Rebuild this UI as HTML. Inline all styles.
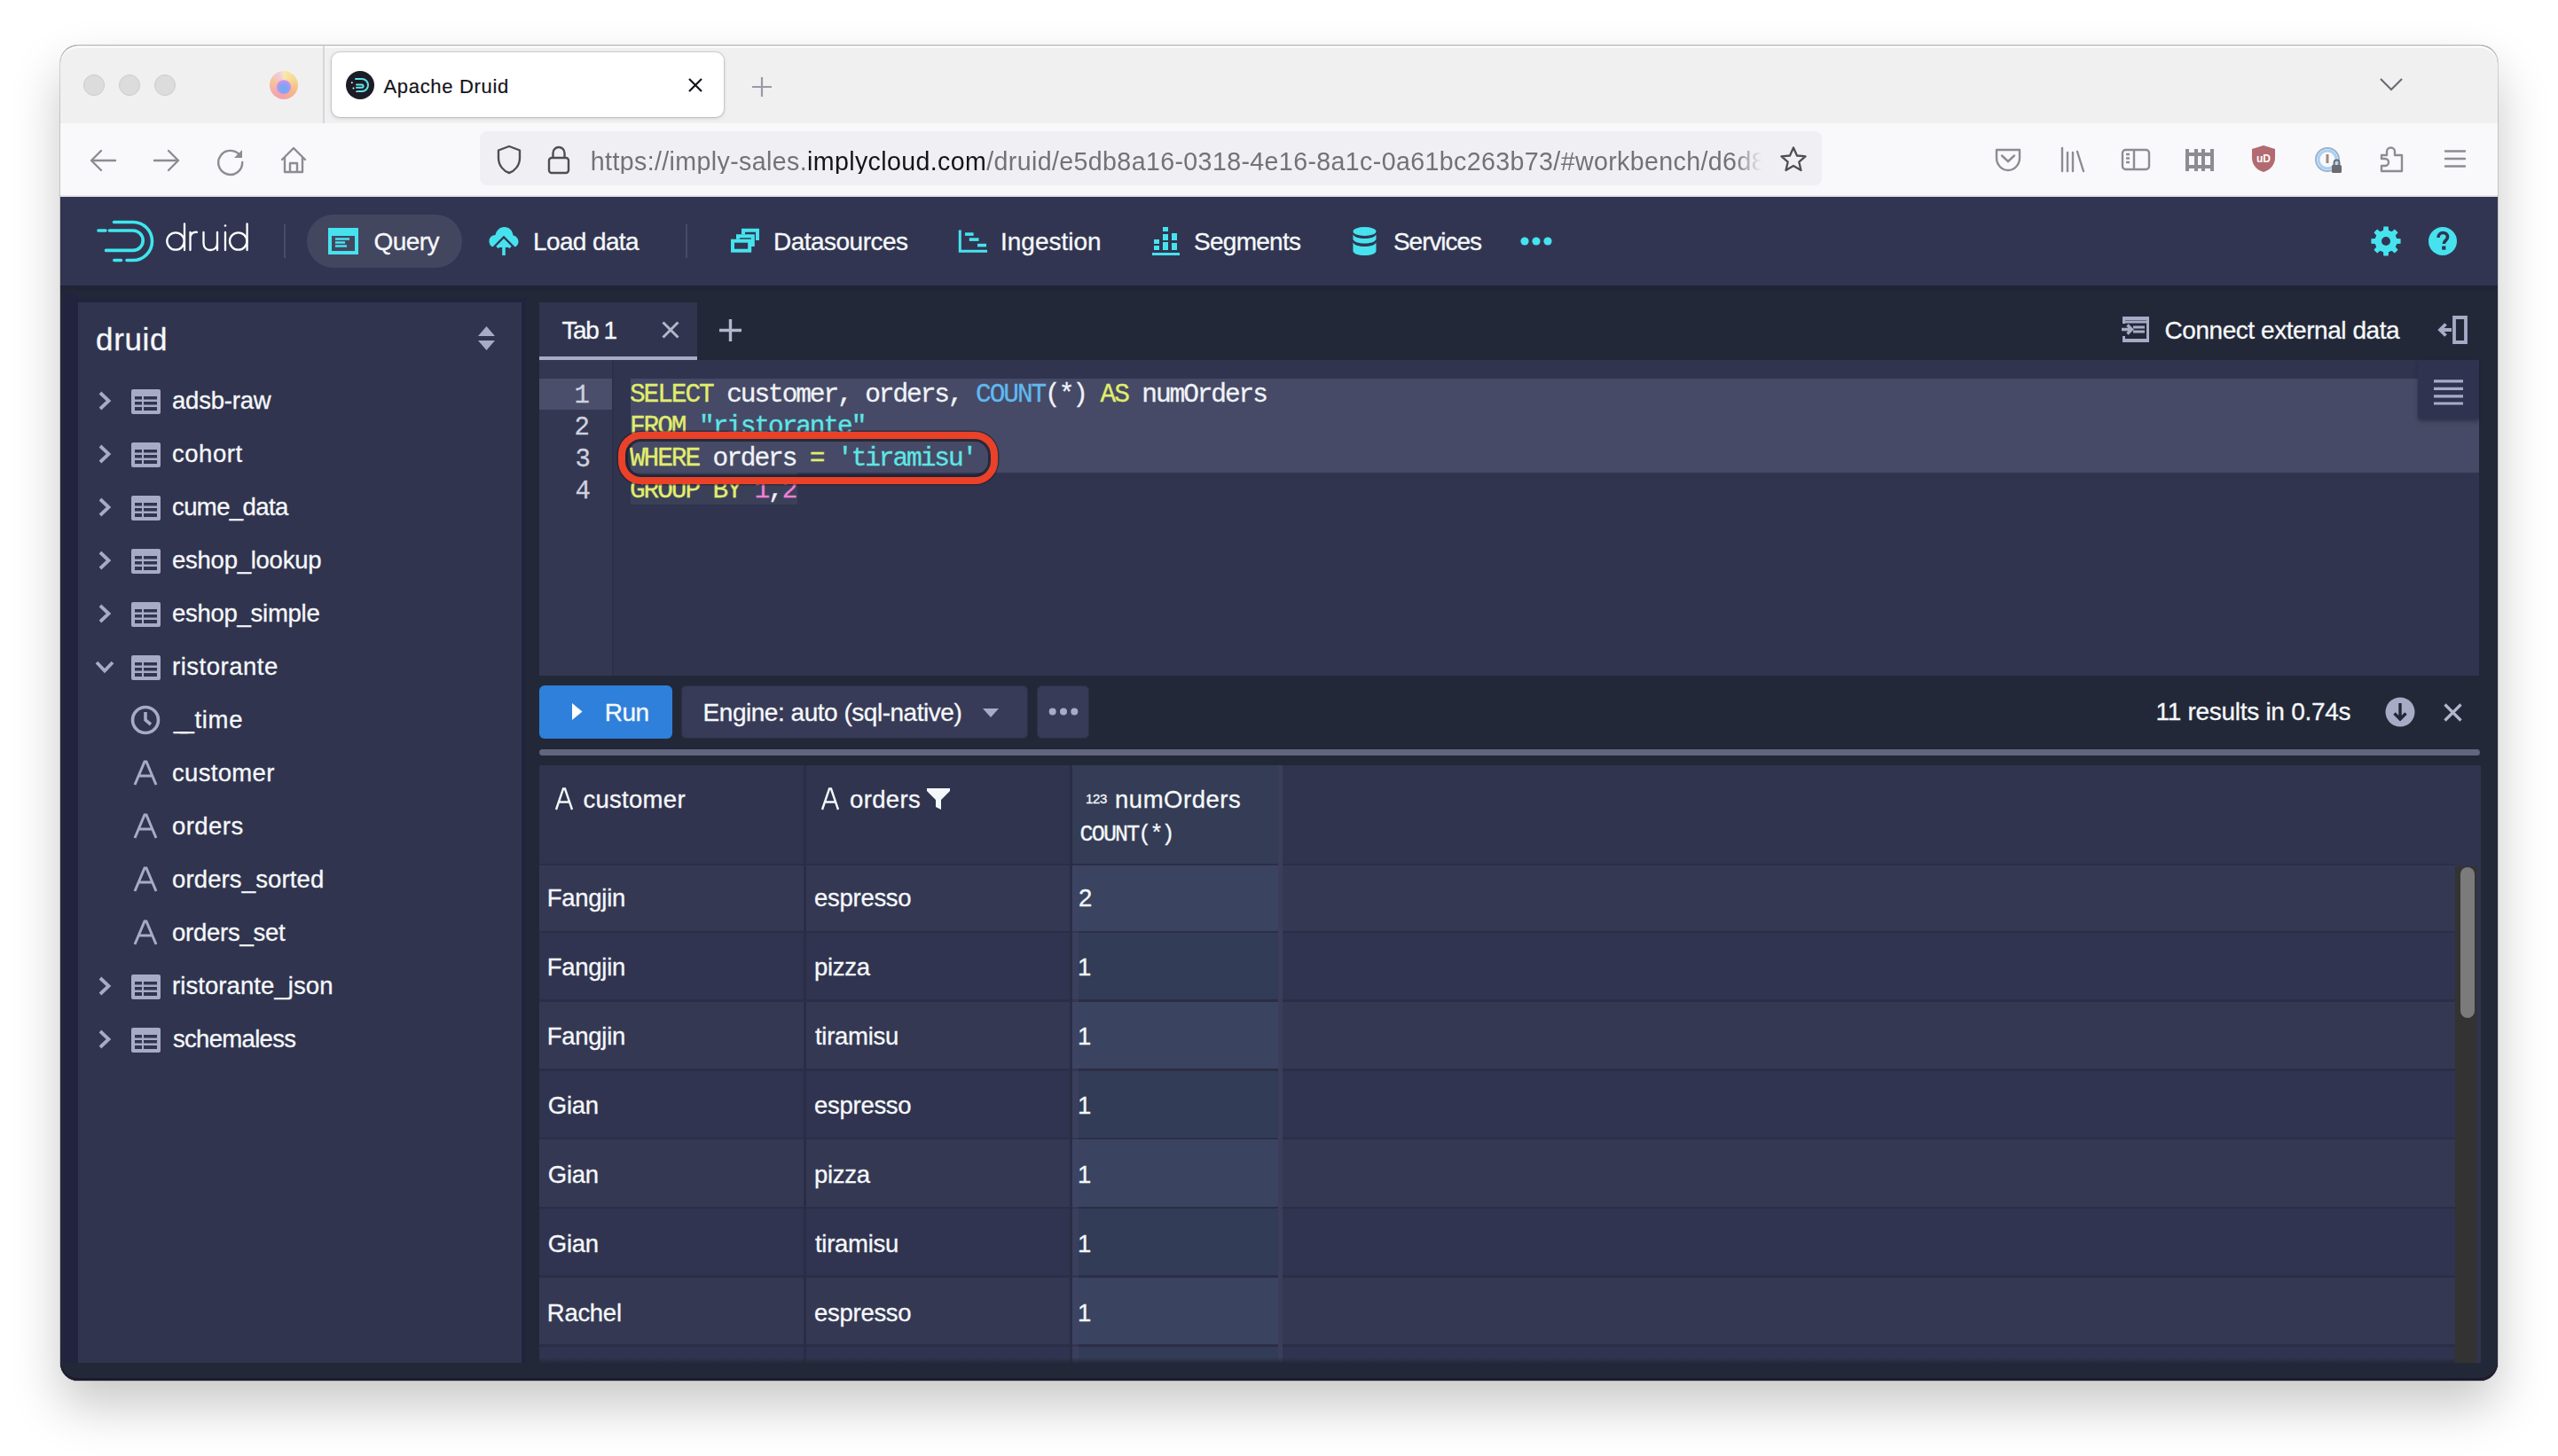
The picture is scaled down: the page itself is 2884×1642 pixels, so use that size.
<!DOCTYPE html>
<html><head><meta charset="utf-8">
<style>
*{box-sizing:border-box;margin:0;padding:0}
html,body{width:2884px;height:1642px;overflow:hidden;background:#ffffff;font-family:"Liberation Sans",sans-serif;position:relative}
.a{position:absolute}
.t{position:absolute;white-space:nowrap;line-height:1}
svg{position:absolute;overflow:visible}
.m{font-family:"Liberation Mono",monospace}
</style></head>
<body>
<!-- window base + shadow -->
<div class="a" style="left:68px;top:51px;width:2748px;height:1506px;border-radius:20px;background:#232838;box-shadow:0 28px 56px rgba(0,0,0,0.22),0 0 0 1px rgba(0,0,0,0.14)"></div>
<!-- tab strip -->
<div class="a" style="left:68px;top:51px;width:2748px;height:88px;background:#f0f0f1;border-radius:20px 20px 0 0;border-top:1px solid #c9c9cc;box-shadow:inset 0 2px 0 rgba(255,255,255,0.85)"></div>
<!-- toolbar -->
<div class="a" style="left:68px;top:139px;width:2748px;height:83px;background:#f9f9fb"></div>
<div class="a" style="left:68px;top:220px;width:2748px;height:2px;background:#e4e4ea"></div>

<!-- traffic lights -->
<div class="a" style="left:94px;top:84px;width:24px;height:24px;border-radius:50%;background:#dcdcdc;border:1px solid #cbcbcb"></div>
<div class="a" style="left:134px;top:84px;width:24px;height:24px;border-radius:50%;background:#dcdcdc;border:1px solid #cbcbcb"></div>
<div class="a" style="left:174px;top:84px;width:24px;height:24px;border-radius:50%;background:#dcdcdc;border:1px solid #cbcbcb"></div>
<!-- firefox icon -->
<div class="a" style="left:304px;top:80px;width:32px;height:32px;border-radius:50%;background:conic-gradient(from 0deg,#f9e9a0 0deg,#f8d48a 60deg,#f7b27e 120deg,#f59aa0 180deg,#f4a0a8 230deg,#f6c08a 290deg,#f3c6e8 340deg,#f9e9a0 360deg);opacity:.9"></div>
<div class="a" style="left:312px;top:90px;width:16px;height:16px;border-radius:50%;background:radial-gradient(circle at 50% 60%,#7fa6f4 0 35%,#c690f0 65%,rgba(240,160,200,0) 100%)"></div>
<!-- separator -->
<div class="a" style="left:364px;top:52px;width:2px;height:87px;background:#d6d6da"></div>
<!-- active tab -->
<div class="a" style="left:374px;top:59px;width:442px;height:73px;border-radius:9px;background:#ffffff;box-shadow:0 0 0 1px rgba(0,0,0,0.10),0 1px 4px rgba(0,0,0,0.18)"></div>
<div class="a" style="left:390px;top:80px;width:32px;height:32px;border-radius:50%;background:#1c1c26"></div>
<svg style="left:390px;top:80px" width="32" height="32" viewBox="0 0 32 32"><g fill="none" stroke="#5fe3e8" stroke-width="2" stroke-linecap="round"><path d="M11 9 H18 A7 7 0 0 1 18 23 H14"/><path d="M12 15.5 H18 A1.6 1.6 0 0 1 18 18.7 H12"/></g><g fill="#e8f4f8"><circle cx="6.8" cy="13.2" r="1"/><circle cx="8.5" cy="19.5" r="1"/><circle cx="12.3" cy="23.2" r="0.9"/></g></svg>
<div class="t" style="left:432.5px;top:86.9px;font-size:22px;letter-spacing:0.68px;color:#15141a;-webkit-text-stroke:0.2px #15141a">Apache Druid</div>
<svg style="left:776px;top:88px" width="16" height="16" viewBox="0 0 16 16"><path d="M1 1 L15 15 M15 1 L1 15" stroke="#15141a" stroke-width="2.2"/></svg>
<svg style="left:848px;top:87px" width="22" height="22" viewBox="0 0 22 22"><path d="M11 0 V22 M0 11 H22" stroke="#9a9aa6" stroke-width="2.2"/></svg>
<!-- chevron -->
<svg style="left:2683px;top:88px" width="26" height="14" viewBox="0 0 26 14"><path d="M1 1 L13 13 L25 1" fill="none" stroke="#6b6b75" stroke-width="2.2"/></svg>

<!-- nav toolbar icons -->
<svg style="left:100px;top:168px" width="32" height="26" viewBox="0 0 32 26"><path d="M30 13 H3 M14 2 L3 13 L14 24" fill="none" stroke="#8c8c92" stroke-width="2.4" stroke-linecap="round" stroke-linejoin="round"/></svg>
<svg style="left:172px;top:168px" width="32" height="26" viewBox="0 0 32 26"><path d="M2 13 H29 M18 2 L29 13 L18 24" fill="none" stroke="#8c8c92" stroke-width="2.4" stroke-linecap="round" stroke-linejoin="round"/></svg>
<svg style="left:244px;top:166px" width="32" height="32" viewBox="0 0 32 32"><path d="M27 10 A13.5 13.5 0 1 0 29.2 17" fill="none" stroke="#8c8c92" stroke-width="2.4" stroke-linecap="round"/><path d="M29 3 V12 H20 Z" fill="#8c8c92"/></svg>
<svg style="left:315px;top:165px" width="32" height="32" viewBox="0 0 32 32"><path d="M3 15 L16 2 L29 15 M6 12 V29 H26 V12 M12 29 V19 H20 V29" fill="none" stroke="#8c8c92" stroke-width="2.4" stroke-linecap="round" stroke-linejoin="round"/></svg>

<!-- url bar -->
<div class="a" style="left:541px;top:148px;width:1513px;height:61px;border-radius:8px;background:#f0f0f4"></div>
<svg style="left:559px;top:163px" width="30" height="34" viewBox="0 0 30 34"><path d="M15 2 L27 6.5 V15 C27 24 21 30 15 32 C9 30 3 24 3 15 V6.5 Z" fill="none" stroke="#4e4e56" stroke-width="2.4" stroke-linejoin="round"/></svg>
<svg style="left:617px;top:163px" width="26" height="34" viewBox="0 0 26 34"><rect x="2" y="15" width="22" height="17" rx="3" fill="none" stroke="#4e4e56" stroke-width="2.4"/><path d="M6.5 15 V9.5 A6.5 6.5 0 0 1 19.5 9.5 V15" fill="none" stroke="#4e4e56" stroke-width="2.4"/></svg>
<div class="t" style="left:665.8px;top:167.6px;width:1322px;overflow:hidden;font-size:28.6px;letter-spacing:0.37px;color:#727279;-webkit-mask-image:linear-gradient(to right,#000 0,#000 1290px,transparent 1320px)">https://imply-sales.<span style="color:#15141a">implycloud.com</span>/druid/e5db8a16-0318-4e16-8a1c-0a61bc263b73/#workbench/d6d8a5f2</div>
<svg style="left:2006px;top:164px" width="32" height="32" viewBox="0 0 32 32"><path d="M16 2.5 L20 11.5 L29.5 12.3 L22.3 18.6 L24.5 28 L16 23 L7.5 28 L9.7 18.6 L2.5 12.3 L12 11.5 Z" fill="none" stroke="#4e4e56" stroke-width="2.3" stroke-linejoin="round"/></svg>

<!-- right toolbar icons -->
<svg style="left:2249px;top:167px" width="30" height="27" viewBox="0 0 30 27"><path d="M2 2 H28 V11 C28 19 22 25 15 25 C8 25 2 19 2 11 Z" fill="none" stroke="#8c8c92" stroke-width="2.4" stroke-linejoin="round"/><path d="M8 8.5 L15 15 L22 8.5" fill="none" stroke="#8c8c92" stroke-width="2.4" stroke-linecap="round"/></svg>
<svg style="left:2322px;top:165px" width="30" height="30" viewBox="0 0 30 30"><path d="M3 2 V28 M9 7 V28 M15 7 V28 M20 6 L27 28" fill="none" stroke="#8c8c92" stroke-width="2.4" stroke-linecap="round"/></svg>
<svg style="left:2391px;top:167px" width="34" height="26" viewBox="0 0 34 26"><rect x="2" y="2" width="30" height="22" rx="3.5" fill="none" stroke="#8c8c92" stroke-width="2.4"/><path d="M15 2 V24 M6 7 H10 M6 11.5 H10 M6 16 H10" fill="none" stroke="#8c8c92" stroke-width="2.4"/></svg>
<svg style="left:2463px;top:166px" width="34" height="28" viewBox="0 0 34 28"><path d="M3 2 V27 M31 2 V27 M13 2 V27 M21 2 V27 M3 8 H31 M3 22 H31" fill="none" stroke="#8c8c92" stroke-width="4"/></svg>
<svg style="left:2537px;top:163px" width="30" height="32" viewBox="0 0 30 32"><path d="M15 1 L28 5 V15 C28 23 22 29 15 31 C8 29 2 23 2 15 V5 Z" fill="#b36a70"/><text x="15" y="20" font-family="Liberation Sans" font-size="12" font-weight="bold" fill="#fff" text-anchor="middle">uD</text></svg>
<svg style="left:2609px;top:165px" width="32" height="32" viewBox="0 0 32 32"><circle cx="15" cy="15" r="13" fill="none" stroke="#9bb3cc" stroke-width="2"/><circle cx="15" cy="15" r="10" fill="none" stroke="#a9d0f2" stroke-width="3"/><rect x="13.5" y="9" width="3" height="10" fill="#9c8a7a"/><rect x="20" y="21" width="11" height="9" rx="1.5" fill="#6a6a70"/><path d="M22.5 21 V18.5 A3 3 0 0 1 28.5 18.5 V21" fill="none" stroke="#6a6a70" stroke-width="1.8"/></svg>
<svg style="left:2682px;top:163px" width="30" height="33" viewBox="0 0 30 33"><path d="M3 12 H9 V8 A4.5 4.5 0 0 1 18 8 V12 H26 V30 H3 V24 H7 A4 4 0 0 0 7 16 H3 Z" fill="none" stroke="#8c8c92" stroke-width="2.4" stroke-linejoin="round"/></svg>
<svg style="left:2755px;top:168px" width="26" height="22" viewBox="0 0 26 22"><path d="M2 2.5 H24 M2 11 H24 M2 19.5 H24" fill="none" stroke="#8c8c92" stroke-width="2.4" stroke-linecap="round"/></svg>

<div class="a" style="left:68px;top:222px;width:2748px;height:100px;background:#323551"></div>
<svg style="left:106px;top:244px" width="70" height="56" viewBox="106 244 70 56"><g fill="none" stroke="#3fe6ee" stroke-width="3.6" stroke-linecap="round">
<path d="M128.5 250.5 H150 A21.5 21.5 0 0 1 150 293.5 H143"/>
<path d="M128.8 293.5 H136.5"/>
<path d="M111 260 H119"/>
<path d="M123.5 260 H150 A11.2 11.2 0 0 1 150 282.4 H119.5"/>
</g></svg>
<svg style="left:184px;top:248px" width="100" height="40" viewBox="184 248 100 40"><g fill="none" stroke="#ffffff" stroke-width="2.3" stroke-linecap="round">
<circle cx="198" cy="272" r="9.7"/><path d="M208 252.5 V282"/>
<path d="M214.5 282 V262 M214.5 267 C215.5 263 218.5 261.5 222 261.8"/>
<path d="M229.5 262 V274 C229.5 279 232.5 282 237 282 C241.5 282 245 279 245 274 V262 M245 262 V282"/>
<path d="M254 262 V282"/><circle cx="254" cy="254.5" r="1.3" fill="#fff" stroke="none"/>
<circle cx="268.7" cy="272" r="9.7"/><path d="M278.6 252.5 V282"/>
</g></svg>
<div class="a" style="left:320px;top:253px;width:2px;height:38px;background:#474b66"></div>
<div class="a" style="left:773px;top:253px;width:2px;height:38px;background:#474b66"></div>
<div class="a" style="left:346px;top:242px;width:175px;height:60px;border-radius:30px;background:#43465f"></div>
<svg style="left:370px;top:257px" width="35" height="30" viewBox="0 0 35 30"><path d="M0 0 H34 V30 H0 Z M4 9 V26 H30 V9 Z" fill="#46e3ef" fill-rule="evenodd"/><path d="M8 12.5 H24 M8 16.5 H19 M8 20.5 H21" stroke="#46e3ef" stroke-width="2.4"/></svg>
<svg style="left:551px;top:256px" width="34" height="33" viewBox="0 0 34 33"><path d="M7 23 C3 23 0.5 20 0.5 16 C0.5 12 3.5 9 7.5 9 C8.5 4 12.5 0 17.5 0 C23 0 27 4 27.5 9.5 C31 10 33.5 13 33.5 16.5 C33.5 20 31 23 27.5 23 Z" fill="#46e3ef"/><path d="M5 25 L17 13 L29 25" fill="none" stroke="#323551" stroke-width="4.5"/><path d="M9.5 23 L17 15.5 L24.5 23" fill="none" stroke="#46e3ef" stroke-width="3.4"/><path d="M17 17 V32" stroke="#46e3ef" stroke-width="3.6"/></svg>
<svg style="left:815px;top:250px" width="50" height="40" viewBox="815 250 50 40"><g fill="none" stroke="#46e3ef" stroke-width="4"><rect x="826" y="271.7" width="19.2" height="11"/><path d="M832 269.7 V266.3 H848.8 V278"/><path d="M838 264.3 V259.7 H854 V271"/></g></svg>
<svg style="left:1075px;top:250px" width="45" height="40" viewBox="1075 250 45 40"><path d="M1082.3 259.5 V283.2 H1113" fill="none" stroke="#46e3ef" stroke-width="3"/><rect x="1088" y="262.3" width="9.6" height="3.6" fill="#46e3ef"/><rect x="1092.8" y="268.3" width="10.7" height="3.6" fill="#46e3ef"/><rect x="1102" y="274.8" width="10" height="3.6" fill="#46e3ef"/></svg>
<svg style="left:1299px;top:256px" width="32" height="32" viewBox="0 0 32 32"><path d="M0 30.5 H31" stroke="#46e3ef" stroke-width="3"/><g fill="#46e3ef"><rect x="2" y="14" width="6" height="5"/><rect x="2" y="21" width="6" height="5"/><rect x="12" y="0" width="6" height="5"/><rect x="12" y="8" width="6" height="7"/><rect x="12" y="17" width="6" height="9"/><rect x="22" y="7" width="6" height="8"/><rect x="22" y="18" width="6" height="8"/></g></svg>
<svg style="left:1524px;top:256px" width="29" height="32" viewBox="0 0 29 32"><g fill="#46e3ef"><ellipse cx="14.5" cy="5" rx="13" ry="5"/><path d="M1.5 8.5 C3 11.5 8 13 14.5 13 C21 13 26 11.5 27.5 8.5 V14 C26 17 21 18.5 14.5 18.5 C8 18.5 3 17 1.5 14 Z"/><path d="M1.5 17.5 C3 20.5 8 22 14.5 22 C21 22 26 20.5 27.5 17.5 V27 C27.5 30 21.5 32 14.5 32 C7.5 32 1.5 30 1.5 27 Z"/></g></svg>
<svg style="left:1714px;top:266px" width="36" height="12" viewBox="0 0 36 12"><g fill="#46e3ef"><circle cx="5" cy="6" r="4.6"/><circle cx="18" cy="6" r="4.6"/><circle cx="31" cy="6" r="4.6"/></g></svg>
<svg style="left:2673px;top:255px" width="34" height="34" viewBox="0 0 34 34"><path fill="#46e3ef" fill-rule="evenodd" d="M14.00 4.76 L14.32 0.41 L19.68 0.41 L20.00 4.76 L23.54 6.23 L26.84 3.38 L30.62 7.16 L27.77 10.46 L29.24 14.00 L33.59 14.32 L33.59 19.68 L29.24 20.00 L27.77 23.54 L30.62 26.84 L26.84 30.62 L23.54 27.77 L20.00 29.24 L19.68 33.59 L14.32 33.59 L14.00 29.24 L10.46 27.77 L7.16 30.62 L3.38 26.84 L6.23 23.54 L4.76 20.00 L0.41 19.68 L0.41 14.32 L4.76 14.00 L6.23 10.46 L3.38 7.16 L7.16 3.38 L10.46 6.23 Z M17 12 A5 5 0 1 0 17 22 A5 5 0 1 0 17 12 Z"/></svg>
<svg style="left:2738px;top:256px" width="32" height="32" viewBox="0 0 32 32"><circle cx="16" cy="16" r="16" fill="#46e3ef"/><path d="M11 12 C11 8.5 13.5 6.5 16.3 6.5 C19.5 6.5 21.5 8.5 21.5 11.3 C21.5 15 17.3 15.3 17.3 19" fill="none" stroke="#30344f" stroke-width="3.6"/><rect x="15.2" y="21.5" width="4.2" height="4.2" fill="#30344f"/></svg>
<div class="a" style="left:68px;top:322px;width:2748px;height:8px;background:linear-gradient(#1e2232,#232838)"></div>
<div class="a" style="left:71px;top:330px;width:17px;height:1207px;background:#22243d"></div>
<div class="a" style="left:88px;top:341px;width:500px;height:1196px;background:#31344f;box-shadow:0 0 0 5px #21243c"></div>
<svg style="left:538px;top:368px" width="21" height="27" viewBox="0 0 21 27"><path d="M10.5 0 L20 11 H1 Z M10.5 27 L20 16 H1 Z" fill="#a7abc6"/></svg>
<svg style="left:110px;top:441.0px" width="16" height="22" viewBox="0 0 16 22"><path d="M3 2 L12.5 11 L3 20" fill="none" stroke="#a7abc6" stroke-width="3.8"/></svg>
<svg style="left:148px;top:439.0px" width="33" height="28" viewBox="0 0 33 28"><path fill="#a7abc6" fill-rule="evenodd" d="M2 0 H31 A2 2 0 0 1 33 2 V26 A2 2 0 0 1 31 28 H2 A2 2 0 0 1 0 26 V2 A2 2 0 0 1 2 0 Z M4 8 V11.5 H12 V8 Z M14 8 V11.5 H29 V8 Z M4 14 V17.5 H12 V14 Z M14 14 V17.5 H29 V14 Z M4 20 V24 H12 V20 Z M14 20 V24 H29 V20 Z"/></svg>
<svg style="left:110px;top:501.0px" width="16" height="22" viewBox="0 0 16 22"><path d="M3 2 L12.5 11 L3 20" fill="none" stroke="#a7abc6" stroke-width="3.8"/></svg>
<svg style="left:148px;top:499.0px" width="33" height="28" viewBox="0 0 33 28"><path fill="#a7abc6" fill-rule="evenodd" d="M2 0 H31 A2 2 0 0 1 33 2 V26 A2 2 0 0 1 31 28 H2 A2 2 0 0 1 0 26 V2 A2 2 0 0 1 2 0 Z M4 8 V11.5 H12 V8 Z M14 8 V11.5 H29 V8 Z M4 14 V17.5 H12 V14 Z M14 14 V17.5 H29 V14 Z M4 20 V24 H12 V20 Z M14 20 V24 H29 V20 Z"/></svg>
<svg style="left:110px;top:561.0px" width="16" height="22" viewBox="0 0 16 22"><path d="M3 2 L12.5 11 L3 20" fill="none" stroke="#a7abc6" stroke-width="3.8"/></svg>
<svg style="left:148px;top:559.0px" width="33" height="28" viewBox="0 0 33 28"><path fill="#a7abc6" fill-rule="evenodd" d="M2 0 H31 A2 2 0 0 1 33 2 V26 A2 2 0 0 1 31 28 H2 A2 2 0 0 1 0 26 V2 A2 2 0 0 1 2 0 Z M4 8 V11.5 H12 V8 Z M14 8 V11.5 H29 V8 Z M4 14 V17.5 H12 V14 Z M14 14 V17.5 H29 V14 Z M4 20 V24 H12 V20 Z M14 20 V24 H29 V20 Z"/></svg>
<svg style="left:110px;top:621.0px" width="16" height="22" viewBox="0 0 16 22"><path d="M3 2 L12.5 11 L3 20" fill="none" stroke="#a7abc6" stroke-width="3.8"/></svg>
<svg style="left:148px;top:619.0px" width="33" height="28" viewBox="0 0 33 28"><path fill="#a7abc6" fill-rule="evenodd" d="M2 0 H31 A2 2 0 0 1 33 2 V26 A2 2 0 0 1 31 28 H2 A2 2 0 0 1 0 26 V2 A2 2 0 0 1 2 0 Z M4 8 V11.5 H12 V8 Z M14 8 V11.5 H29 V8 Z M4 14 V17.5 H12 V14 Z M14 14 V17.5 H29 V14 Z M4 20 V24 H12 V20 Z M14 20 V24 H29 V20 Z"/></svg>
<svg style="left:110px;top:681.0px" width="16" height="22" viewBox="0 0 16 22"><path d="M3 2 L12.5 11 L3 20" fill="none" stroke="#a7abc6" stroke-width="3.8"/></svg>
<svg style="left:148px;top:679.0px" width="33" height="28" viewBox="0 0 33 28"><path fill="#a7abc6" fill-rule="evenodd" d="M2 0 H31 A2 2 0 0 1 33 2 V26 A2 2 0 0 1 31 28 H2 A2 2 0 0 1 0 26 V2 A2 2 0 0 1 2 0 Z M4 8 V11.5 H12 V8 Z M14 8 V11.5 H29 V8 Z M4 14 V17.5 H12 V14 Z M14 14 V17.5 H29 V14 Z M4 20 V24 H12 V20 Z M14 20 V24 H29 V20 Z"/></svg>
<svg style="left:107px;top:744.0px" width="22" height="16" viewBox="0 0 22 16"><path d="M2 3 L11 12.5 L20 3" fill="none" stroke="#a7abc6" stroke-width="3.8"/></svg>
<svg style="left:148px;top:739.0px" width="33" height="28" viewBox="0 0 33 28"><path fill="#a7abc6" fill-rule="evenodd" d="M2 0 H31 A2 2 0 0 1 33 2 V26 A2 2 0 0 1 31 28 H2 A2 2 0 0 1 0 26 V2 A2 2 0 0 1 2 0 Z M4 8 V11.5 H12 V8 Z M14 8 V11.5 H29 V8 Z M4 14 V17.5 H12 V14 Z M14 14 V17.5 H29 V14 Z M4 20 V24 H12 V20 Z M14 20 V24 H29 V20 Z"/></svg>
<svg style="left:147px;top:795.0px" width="34" height="34" viewBox="0 0 34 34"><circle cx="17" cy="17" r="14.5" fill="none" stroke="#a7abc6" stroke-width="3.6"/><path d="M17 8 V17 L23 22" fill="none" stroke="#a7abc6" stroke-width="3.6"/></svg>
<svg style="left:150px;top:858.0px" width="28" height="28" viewBox="0 0 28 28"><path d="M2 27 L13 1 H15 L26 27 M6.5 17 H21.5" fill="none" stroke="#a7abc6" stroke-width="3"/></svg>
<svg style="left:150px;top:918.0px" width="28" height="28" viewBox="0 0 28 28"><path d="M2 27 L13 1 H15 L26 27 M6.5 17 H21.5" fill="none" stroke="#a7abc6" stroke-width="3"/></svg>
<svg style="left:150px;top:978.0px" width="28" height="28" viewBox="0 0 28 28"><path d="M2 27 L13 1 H15 L26 27 M6.5 17 H21.5" fill="none" stroke="#a7abc6" stroke-width="3"/></svg>
<svg style="left:150px;top:1038.0px" width="28" height="28" viewBox="0 0 28 28"><path d="M2 27 L13 1 H15 L26 27 M6.5 17 H21.5" fill="none" stroke="#a7abc6" stroke-width="3"/></svg>
<svg style="left:110px;top:1101.0px" width="16" height="22" viewBox="0 0 16 22"><path d="M3 2 L12.5 11 L3 20" fill="none" stroke="#a7abc6" stroke-width="3.8"/></svg>
<svg style="left:148px;top:1099.0px" width="33" height="28" viewBox="0 0 33 28"><path fill="#a7abc6" fill-rule="evenodd" d="M2 0 H31 A2 2 0 0 1 33 2 V26 A2 2 0 0 1 31 28 H2 A2 2 0 0 1 0 26 V2 A2 2 0 0 1 2 0 Z M4 8 V11.5 H12 V8 Z M14 8 V11.5 H29 V8 Z M4 14 V17.5 H12 V14 Z M14 14 V17.5 H29 V14 Z M4 20 V24 H12 V20 Z M14 20 V24 H29 V20 Z"/></svg>
<svg style="left:110px;top:1161.0px" width="16" height="22" viewBox="0 0 16 22"><path d="M3 2 L12.5 11 L3 20" fill="none" stroke="#a7abc6" stroke-width="3.8"/></svg>
<svg style="left:148px;top:1159.0px" width="33" height="28" viewBox="0 0 33 28"><path fill="#a7abc6" fill-rule="evenodd" d="M2 0 H31 A2 2 0 0 1 33 2 V26 A2 2 0 0 1 31 28 H2 A2 2 0 0 1 0 26 V2 A2 2 0 0 1 2 0 Z M4 8 V11.5 H12 V8 Z M14 8 V11.5 H29 V8 Z M4 14 V17.5 H12 V14 Z M14 14 V17.5 H29 V14 Z M4 20 V24 H12 V20 Z M14 20 V24 H29 V20 Z"/></svg>
<div class="a" style="left:608px;top:341px;width:178px;height:61px;background:#31344f"></div>
<div class="a" style="left:608px;top:402px;width:178px;height:4px;background:#a7abc6"></div>
<svg style="left:746px;top:362px" width="20" height="20" viewBox="0 0 20 20"><path d="M1.5 1.5 L18.5 18.5 M18.5 1.5 L1.5 18.5" stroke="#b3b7cc" stroke-width="3"/></svg>
<svg style="left:811px;top:360px" width="25" height="25" viewBox="0 0 25 25"><path d="M12.5 0 V25 M0 12.5 H25" stroke="#b3b7cc" stroke-width="3.4"/></svg>
<svg style="left:2392px;top:357px" width="32" height="29" viewBox="0 0 32 29"><path fill="#a7abc6" fill-rule="evenodd" d="M1 0 H31 V29 H1 V22 H4 V25 H28 V4 H4 V8 H1 Z"/><path d="M4 6 H28 M13 12 H26 M13 17 H26" stroke="#a7abc6" stroke-width="3"/><path d="M0 14.5 H10 M6.5 9.5 L11.5 14.5 L6.5 19.5" fill="none" stroke="#a7abc6" stroke-width="3.4"/></svg>
<svg style="left:2749px;top:356px" width="34" height="32" viewBox="0 0 34 32"><path d="M18 2 H31 V30 H18 Z" fill="none" stroke="#a7abc6" stroke-width="3.8"/><path d="M2 16 H15 M8.5 9.5 L2 16 L8.5 22.5" fill="none" stroke="#a7abc6" stroke-width="3.8"/></svg>
<div class="a" style="left:608px;top:406px;width:2187px;height:356px;background:#30344f"></div>
<div class="a" style="left:608px;top:406px;width:82px;height:356px;background:#333752"></div>
<div class="a" style="left:690px;top:406px;width:2px;height:356px;background:#2c3049"></div>
<div class="a" style="left:711px;top:426.6px;width:2084px;height:106px;background:#464a66"></div>
<div class="a" style="left:711px;top:532.6px;width:188px;height:36px;background:#3b4059"></div>
<div class="a" style="left:608px;top:426.6px;width:82px;height:35px;background:#4a4e6a"></div>
<div class="t m" style="left:710px;top:431.0px;font-size:29.5px;letter-spacing:-2.1px;white-space:pre;-webkit-text-stroke:0.3px currentColor"><span style="color:#e2ed6d">SELECT</span><span style="color:#f0f2f8"> customer, orders, </span><span style="color:#5fb9ef">COUNT</span><span style="color:#f0f2f8">(*) </span><span style="color:#e2ed6d">AS</span><span style="color:#f0f2f8"> numOrders</span></div>
<div class="t m" style="left:710px;top:467.0px;font-size:29.5px;letter-spacing:-2.1px;white-space:pre;-webkit-text-stroke:0.3px currentColor"><span style="color:#e2ed6d">FROM</span><span style="color:#f0f2f8"> </span><span style="color:#5ee6e6">&quot;ristorante&quot;</span></div>
<div class="t m" style="left:710px;top:503.0px;font-size:29.5px;letter-spacing:-2.1px;white-space:pre;-webkit-text-stroke:0.3px currentColor"><span style="color:#e2ed6d">WHERE</span><span style="color:#f0f2f8"> orders </span><span style="color:#e2ed6d">=</span><span style="color:#f0f2f8"> </span><span style="color:#5ee6e6">&#x27;tiramisu&#x27;</span></div>
<div class="t m" style="left:710px;top:539.0px;font-size:29.5px;letter-spacing:-2.1px;white-space:pre;-webkit-text-stroke:0.3px currentColor"><span style="color:#e2ed6d">GROUP BY</span><span style="color:#f0f2f8"> </span><span style="color:#ee7fd5">1</span><span style="color:#f0f2f8">,</span><span style="color:#ee7fd5">2</span></div>
<div class="a" style="left:2726px;top:406px;width:69px;height:66px;background:#2f3350;border-radius:0 0 0 4px;box-shadow:0 3px 4px rgba(20,22,40,0.45)"></div>
<svg style="left:2743.5px;top:428px" width="33" height="28" viewBox="0 0 33 28"><path d="M0 1.8 H33 M0 10.3 H33 M0 18.8 H33 M0 27 H33" stroke="#a7abc6" stroke-width="3.2"/></svg>
<div class="a" style="left:697px;top:487px;width:428px;height:58.5px;border:8px solid #ea4128;border-radius:26px;box-shadow:inset 0 0 0 3px rgba(28,34,48,0.8),0 0 0 1.5px rgba(40,20,30,0.5)"></div>
<div class="a" style="left:607.5px;top:773px;width:150.5px;height:60px;border-radius:6px;background:#2e80da"></div>
<svg style="left:645px;top:792.5px" width="12" height="19" viewBox="0 0 12 19"><path d="M0 0 L11.5 9.5 L0 19 Z" fill="#ffffff"/></svg>
<div class="a" style="left:768px;top:773px;width:391px;height:60px;border-radius:6px;background:#383b57;box-shadow:inset 0 0 0 1px #2c2f47"></div>
<svg style="left:1108px;top:798.8px" width="18" height="10" viewBox="0 0 18 10"><path d="M0 0 H18 L9 10 Z" fill="#a7abc6"/></svg>
<div class="a" style="left:1169px;top:773px;width:59px;height:60px;border-radius:6px;background:#383b57;box-shadow:inset 0 0 0 1px #2c2f47"></div>
<svg style="left:1182px;top:798px" width="34" height="10" viewBox="0 0 34 10"><g fill="#a7abc6"><circle cx="4.7" cy="4.5" r="4"/><circle cx="17" cy="4.5" r="4"/><circle cx="29.3" cy="4.5" r="4"/></g></svg>
<svg style="left:2689px;top:786px" width="34" height="34" viewBox="0 0 34 34"><circle cx="17" cy="17" r="16.5" fill="#a7abc6"/><path d="M17 7 V25 M10.5 18.5 L17 25 L23.5 18.5" fill="none" stroke="#232838" stroke-width="3.4"/></svg>
<svg style="left:2754.5px;top:792.5px" width="21" height="21" viewBox="0 0 21 21"><path d="M1.5 1.5 L19.5 19.5 M19.5 1.5 L1.5 19.5" stroke="#b3b7cc" stroke-width="3.2"/></svg>
<div class="a" style="left:608px;top:844.5px;width:2188px;height:7px;border-radius:4px;background:#62667f"></div>
<div class="a" style="left:608px;top:863px;width:2189px;height:674px;background:#31344f"></div>
<div class="a" style="left:1207px;top:863px;width:237px;height:113px;background:#343c56"></div>
<div class="a" style="left:608px;top:975.50px;width:2160px;height:74.00px;background:#353853"></div>
<div class="a" style="left:1207px;top:975.50px;width:237px;height:74.00px;background:#3a4460"></div>
<div class="a" style="left:608px;top:973.50px;width:2160px;height:2.5px;background:#2b2e46"></div>
<div class="a" style="left:608px;top:1051.50px;width:2160px;height:75.75px;background:#313450"></div>
<div class="a" style="left:1207px;top:1051.50px;width:237px;height:75.75px;background:#333c56"></div>
<div class="a" style="left:608px;top:1049.50px;width:2160px;height:2.5px;background:#2b2e46"></div>
<div class="a" style="left:608px;top:1129.25px;width:2160px;height:75.75px;background:#353853"></div>
<div class="a" style="left:1207px;top:1129.25px;width:237px;height:75.75px;background:#3a4460"></div>
<div class="a" style="left:608px;top:1127.25px;width:2160px;height:2.5px;background:#2b2e46"></div>
<div class="a" style="left:608px;top:1207.00px;width:2160px;height:75.75px;background:#313450"></div>
<div class="a" style="left:1207px;top:1207.00px;width:237px;height:75.75px;background:#333c56"></div>
<div class="a" style="left:608px;top:1205.00px;width:2160px;height:2.5px;background:#2b2e46"></div>
<div class="a" style="left:608px;top:1284.75px;width:2160px;height:75.75px;background:#353853"></div>
<div class="a" style="left:1207px;top:1284.75px;width:237px;height:75.75px;background:#3a4460"></div>
<div class="a" style="left:608px;top:1282.75px;width:2160px;height:2.5px;background:#2b2e46"></div>
<div class="a" style="left:608px;top:1362.50px;width:2160px;height:75.75px;background:#313450"></div>
<div class="a" style="left:1207px;top:1362.50px;width:237px;height:75.75px;background:#333c56"></div>
<div class="a" style="left:608px;top:1360.50px;width:2160px;height:2.5px;background:#2b2e46"></div>
<div class="a" style="left:608px;top:1440.25px;width:2160px;height:75.75px;background:#353853"></div>
<div class="a" style="left:1207px;top:1440.25px;width:237px;height:75.75px;background:#3a4460"></div>
<div class="a" style="left:608px;top:1438.25px;width:2160px;height:2.5px;background:#2b2e46"></div>
<div class="a" style="left:608px;top:1518.00px;width:2160px;height:19.00px;background:#313450"></div>
<div class="a" style="left:1207px;top:1518.00px;width:237px;height:19.00px;background:#333c56"></div>
<div class="a" style="left:608px;top:1516.00px;width:2160px;height:2.5px;background:#2b2e46"></div>
<div class="a" style="left:906px;top:863px;width:2.5px;height:674px;background:#2a2d45"></div>
<div class="a" style="left:1206px;top:863px;width:2.5px;height:674px;background:#2a2d45"></div>
<div class="a" style="left:1441px;top:863px;width:5px;height:674px;background:#3b3d5a"></div>
<div class="a" style="left:1208.5px;top:975.5px;width:7px;height:561px;background:rgba(70,70,105,0.35)"></div>
<svg style="left:626px;top:888.5px" width="20" height="24" viewBox="0 0 20 24"><path d="M1 24 L9 0.5 H11 L19 24 M4.5 15.5 H15.5" fill="none" stroke="#f5f8fa" stroke-width="2.4"/></svg>
<svg style="left:926px;top:888.5px" width="20" height="24" viewBox="0 0 20 24"><path d="M1 24 L9 0.5 H11 L19 24 M4.5 15.5 H15.5" fill="none" stroke="#f5f8fa" stroke-width="2.4"/></svg>
<svg style="left:1045px;top:889px" width="26" height="24" viewBox="0 0 26 24"><path d="M0 0 H26 V3 L16 13 V24 L10 21 V13 L0 3 Z" fill="#f5f8fa"/></svg>
<div class="a" style="left:2768px;top:977px;width:25px;height:560px;background:#333333"></div>
<div class="a" style="left:2774px;top:978px;width:16px;height:170px;border-radius:8px;background:#7b7b7b"></div>
<div class="a" style="left:608px;top:1531px;width:2160px;height:6px;background:linear-gradient(rgba(35,40,56,0),rgba(35,40,56,0.9))"></div>
<div class="a" style="left:68px;top:1537px;width:2748px;height:20px;background:#232838;border-radius:0 0 20px 20px;box-shadow:inset 0 -3px 0 #1d1b2d"></div>
<div class="t" style="left:421.6px;top:258.99px;font-size:28px;color:#f5f8fa;font-family:'Liberation Sans',sans-serif;font-weight:normal;letter-spacing:-0.562px;-webkit-text-stroke:0.3px currentColor;">Query</div>
<div class="t" style="left:601.0px;top:258.99px;font-size:28px;color:#f5f8fa;font-family:'Liberation Sans',sans-serif;font-weight:normal;letter-spacing:-0.624px;-webkit-text-stroke:0.3px currentColor;">Load data</div>
<div class="t" style="left:872.0px;top:258.99px;font-size:28px;color:#f5f8fa;font-family:'Liberation Sans',sans-serif;font-weight:normal;letter-spacing:-0.519px;-webkit-text-stroke:0.3px currentColor;">Datasources</div>
<div class="t" style="left:1128.0px;top:258.99px;font-size:28px;color:#f5f8fa;font-family:'Liberation Sans',sans-serif;font-weight:normal;letter-spacing:-0.009px;-webkit-text-stroke:0.3px currentColor;">Ingestion</div>
<div class="t" style="left:1346.0px;top:258.99px;font-size:28px;color:#f5f8fa;font-family:'Liberation Sans',sans-serif;font-weight:normal;letter-spacing:-0.724px;-webkit-text-stroke:0.3px currentColor;">Segments</div>
<div class="t" style="left:1571.0px;top:258.99px;font-size:28px;color:#f5f8fa;font-family:'Liberation Sans',sans-serif;font-weight:normal;letter-spacing:-1.052px;-webkit-text-stroke:0.3px currentColor;">Services</div>
<div class="t" style="left:108.0px;top:365.37px;font-size:35px;color:#f5f8fa;font-family:'Liberation Sans',sans-serif;font-weight:normal;letter-spacing:0.660px;-webkit-text-stroke:0.3px currentColor;">druid</div>
<div class="t" style="left:194.0px;top:438.32px;font-size:27.5px;color:#f5f8fa;font-family:'Liberation Sans',sans-serif;font-weight:normal;letter-spacing:-0.206px;-webkit-text-stroke:0.3px currentColor;">adsb-raw</div>
<div class="t" style="left:194.0px;top:498.32px;font-size:27.5px;color:#f5f8fa;font-family:'Liberation Sans',sans-serif;font-weight:normal;letter-spacing:0.522px;-webkit-text-stroke:0.3px currentColor;">cohort</div>
<div class="t" style="left:194.0px;top:558.32px;font-size:27.5px;color:#f5f8fa;font-family:'Liberation Sans',sans-serif;font-weight:normal;letter-spacing:-0.596px;-webkit-text-stroke:0.3px currentColor;">cume_data</div>
<div class="t" style="left:194.0px;top:618.32px;font-size:27.5px;color:#f5f8fa;font-family:'Liberation Sans',sans-serif;font-weight:normal;letter-spacing:-0.250px;-webkit-text-stroke:0.3px currentColor;">eshop_lookup</div>
<div class="t" style="left:194.0px;top:678.32px;font-size:27.5px;color:#f5f8fa;font-family:'Liberation Sans',sans-serif;font-weight:normal;letter-spacing:-0.272px;-webkit-text-stroke:0.3px currentColor;">eshop_simple</div>
<div class="t" style="left:194.0px;top:738.32px;font-size:27.5px;color:#f5f8fa;font-family:'Liberation Sans',sans-serif;font-weight:normal;letter-spacing:0.518px;-webkit-text-stroke:0.3px currentColor;">ristorante</div>
<div class="t" style="left:196.0px;top:798.32px;font-size:27.5px;color:#f5f8fa;font-family:'Liberation Sans',sans-serif;font-weight:normal;letter-spacing:-7.794px;-webkit-text-stroke:0.3px currentColor;">__</div>
<div class="t" style="left:219.5px;top:798.32px;font-size:27.5px;color:#f5f8fa;font-family:'Liberation Sans',sans-serif;font-weight:normal;letter-spacing:0.681px;-webkit-text-stroke:0.3px currentColor;">time</div>
<div class="t" style="left:194.0px;top:858.32px;font-size:27.5px;color:#f5f8fa;font-family:'Liberation Sans',sans-serif;font-weight:normal;letter-spacing:0.324px;-webkit-text-stroke:0.3px currentColor;">customer</div>
<div class="t" style="left:194.0px;top:918.32px;font-size:27.5px;color:#f5f8fa;font-family:'Liberation Sans',sans-serif;font-weight:normal;letter-spacing:0.440px;-webkit-text-stroke:0.3px currentColor;">orders</div>
<div class="t" style="left:194.0px;top:978.32px;font-size:27.5px;color:#f5f8fa;font-family:'Liberation Sans',sans-serif;font-weight:normal;letter-spacing:0.135px;-webkit-text-stroke:0.3px currentColor;">orders_sorted</div>
<div class="t" style="left:194.0px;top:1038.32px;font-size:27.5px;color:#f5f8fa;font-family:'Liberation Sans',sans-serif;font-weight:normal;letter-spacing:-0.254px;-webkit-text-stroke:0.3px currentColor;">orders_set</div>
<div class="t" style="left:194.0px;top:1098.32px;font-size:27.5px;color:#f5f8fa;font-family:'Liberation Sans',sans-serif;font-weight:normal;letter-spacing:0.080px;-webkit-text-stroke:0.3px currentColor;">ristorante_json</div>
<div class="t" style="left:195.0px;top:1158.32px;font-size:27.5px;color:#f5f8fa;font-family:'Liberation Sans',sans-serif;font-weight:normal;letter-spacing:-0.694px;-webkit-text-stroke:0.3px currentColor;">schemaless</div>
<div class="t" style="left:633.6px;top:358.59px;font-size:28px;color:#f5f8fa;font-family:'Liberation Sans',sans-serif;font-weight:normal;letter-spacing:-1.481px;-webkit-text-stroke:0.3px currentColor;">Tab 1</div>
<div class="t" style="left:2440.5px;top:358.69px;font-size:28px;color:#f5f8fa;font-family:'Liberation Sans',sans-serif;font-weight:normal;letter-spacing:-0.444px;-webkit-text-stroke:0.3px currentColor;">Connect external data</div>
<div class="t" style="left:647.5px;top:432.28px;font-size:29px;color:#ced1df;font-family:'Liberation Mono',monospace;font-weight:normal;letter-spacing:-1.000px;-webkit-text-stroke:0.3px currentColor;">1</div>
<div class="t" style="left:647.5px;top:468.28px;font-size:29px;color:#ced1df;font-family:'Liberation Mono',monospace;font-weight:normal;letter-spacing:-1.000px;-webkit-text-stroke:0.3px currentColor;">2</div>
<div class="t" style="left:648.5px;top:504.28px;font-size:29px;color:#ced1df;font-family:'Liberation Mono',monospace;font-weight:normal;letter-spacing:-2.000px;-webkit-text-stroke:0.3px currentColor;">3</div>
<div class="t" style="left:648.5px;top:540.28px;font-size:29px;color:#ced1df;font-family:'Liberation Mono',monospace;font-weight:normal;letter-spacing:-2.000px;-webkit-text-stroke:0.3px currentColor;">4</div>
<div class="t" style="left:681.8px;top:790.09px;font-size:28px;color:#f5f8fa;font-family:'Liberation Sans',sans-serif;font-weight:normal;letter-spacing:-0.496px;-webkit-text-stroke:0.3px currentColor;">Run</div>
<div class="t" style="left:792.6px;top:790.09px;font-size:28px;color:#f5f8fa;font-family:'Liberation Sans',sans-serif;font-weight:normal;letter-spacing:-0.474px;-webkit-text-stroke:0.3px currentColor;">Engine: auto (sql-native)</div>
<div class="t" style="left:2430.5px;top:789.29px;font-size:28px;color:#f5f8fa;font-family:'Liberation Sans',sans-serif;font-weight:normal;letter-spacing:-0.287px;-webkit-text-stroke:0.3px currentColor;">11 results in 0.74s</div>
<div class="t" style="left:616.8px;top:998.72px;font-size:27.5px;color:#f5f8fa;font-family:'Liberation Sans',sans-serif;font-weight:normal;letter-spacing:-0.280px;-webkit-text-stroke:0.3px currentColor;">Fangjin</div>
<div class="t" style="left:918.0px;top:998.72px;font-size:27.5px;color:#f5f8fa;font-family:'Liberation Sans',sans-serif;font-weight:normal;letter-spacing:-0.280px;-webkit-text-stroke:0.3px currentColor;">espresso</div>
<div class="t" style="left:1216.0px;top:998.72px;font-size:27.5px;color:#f5f8fa;font-family:'Liberation Sans',sans-serif;font-weight:normal;letter-spacing:-0.280px;-webkit-text-stroke:0.3px currentColor;">2</div>
<div class="t" style="left:616.8px;top:1076.72px;font-size:27.5px;color:#f5f8fa;font-family:'Liberation Sans',sans-serif;font-weight:normal;letter-spacing:-0.280px;-webkit-text-stroke:0.3px currentColor;">Fangjin</div>
<div class="t" style="left:918.0px;top:1076.72px;font-size:27.5px;color:#f5f8fa;font-family:'Liberation Sans',sans-serif;font-weight:normal;letter-spacing:-0.280px;-webkit-text-stroke:0.3px currentColor;">pizza</div>
<div class="t" style="left:1215.0px;top:1076.72px;font-size:27.5px;color:#f5f8fa;font-family:'Liberation Sans',sans-serif;font-weight:normal;letter-spacing:-0.280px;-webkit-text-stroke:0.3px currentColor;">1</div>
<div class="t" style="left:616.8px;top:1154.72px;font-size:27.5px;color:#f5f8fa;font-family:'Liberation Sans',sans-serif;font-weight:normal;letter-spacing:-0.280px;-webkit-text-stroke:0.3px currentColor;">Fangjin</div>
<div class="t" style="left:919.0px;top:1154.72px;font-size:27.5px;color:#f5f8fa;font-family:'Liberation Sans',sans-serif;font-weight:normal;letter-spacing:-0.280px;-webkit-text-stroke:0.3px currentColor;">tiramisu</div>
<div class="t" style="left:1215.0px;top:1154.72px;font-size:27.5px;color:#f5f8fa;font-family:'Liberation Sans',sans-serif;font-weight:normal;letter-spacing:-0.280px;-webkit-text-stroke:0.3px currentColor;">1</div>
<div class="t" style="left:617.8px;top:1232.72px;font-size:27.5px;color:#f5f8fa;font-family:'Liberation Sans',sans-serif;font-weight:normal;letter-spacing:-0.280px;-webkit-text-stroke:0.3px currentColor;">Gian</div>
<div class="t" style="left:918.0px;top:1232.72px;font-size:27.5px;color:#f5f8fa;font-family:'Liberation Sans',sans-serif;font-weight:normal;letter-spacing:-0.280px;-webkit-text-stroke:0.3px currentColor;">espresso</div>
<div class="t" style="left:1215.0px;top:1232.72px;font-size:27.5px;color:#f5f8fa;font-family:'Liberation Sans',sans-serif;font-weight:normal;letter-spacing:-0.280px;-webkit-text-stroke:0.3px currentColor;">1</div>
<div class="t" style="left:617.8px;top:1310.72px;font-size:27.5px;color:#f5f8fa;font-family:'Liberation Sans',sans-serif;font-weight:normal;letter-spacing:-0.280px;-webkit-text-stroke:0.3px currentColor;">Gian</div>
<div class="t" style="left:918.0px;top:1310.72px;font-size:27.5px;color:#f5f8fa;font-family:'Liberation Sans',sans-serif;font-weight:normal;letter-spacing:-0.280px;-webkit-text-stroke:0.3px currentColor;">pizza</div>
<div class="t" style="left:1215.0px;top:1310.72px;font-size:27.5px;color:#f5f8fa;font-family:'Liberation Sans',sans-serif;font-weight:normal;letter-spacing:-0.280px;-webkit-text-stroke:0.3px currentColor;">1</div>
<div class="t" style="left:617.8px;top:1388.72px;font-size:27.5px;color:#f5f8fa;font-family:'Liberation Sans',sans-serif;font-weight:normal;letter-spacing:-0.280px;-webkit-text-stroke:0.3px currentColor;">Gian</div>
<div class="t" style="left:919.0px;top:1388.72px;font-size:27.5px;color:#f5f8fa;font-family:'Liberation Sans',sans-serif;font-weight:normal;letter-spacing:-0.280px;-webkit-text-stroke:0.3px currentColor;">tiramisu</div>
<div class="t" style="left:1215.0px;top:1388.72px;font-size:27.5px;color:#f5f8fa;font-family:'Liberation Sans',sans-serif;font-weight:normal;letter-spacing:-0.280px;-webkit-text-stroke:0.3px currentColor;">1</div>
<div class="t" style="left:616.8px;top:1466.72px;font-size:27.5px;color:#f5f8fa;font-family:'Liberation Sans',sans-serif;font-weight:normal;letter-spacing:-0.280px;-webkit-text-stroke:0.3px currentColor;">Rachel</div>
<div class="t" style="left:918.0px;top:1466.72px;font-size:27.5px;color:#f5f8fa;font-family:'Liberation Sans',sans-serif;font-weight:normal;letter-spacing:-0.280px;-webkit-text-stroke:0.3px currentColor;">espresso</div>
<div class="t" style="left:1215.0px;top:1466.72px;font-size:27.5px;color:#f5f8fa;font-family:'Liberation Sans',sans-serif;font-weight:normal;letter-spacing:-0.280px;-webkit-text-stroke:0.3px currentColor;">1</div>
<div class="t" style="left:657.4px;top:887.72px;font-size:27.5px;color:#f5f8fa;font-family:'Liberation Sans',sans-serif;font-weight:normal;letter-spacing:0.296px;-webkit-text-stroke:0.3px currentColor;">customer</div>
<div class="t" style="left:958.0px;top:887.72px;font-size:27.5px;color:#f5f8fa;font-family:'Liberation Sans',sans-serif;font-weight:normal;letter-spacing:0.360px;-webkit-text-stroke:0.3px currentColor;">orders</div>
<div class="t" style="left:1224.0px;top:893.30px;font-size:15px;color:#f5f8fa;font-family:'Liberation Sans',sans-serif;font-weight:normal;letter-spacing:-0.342px;-webkit-text-stroke:0.3px currentColor;">123</div>
<div class="t" style="left:1257.0px;top:887.72px;font-size:27.5px;color:#f5f8fa;font-family:'Liberation Sans',sans-serif;font-weight:normal;letter-spacing:0.526px;-webkit-text-stroke:0.3px currentColor;">numOrders</div>
<div class="t" style="left:1217.6px;top:929.25px;font-size:25px;color:#f5f8fa;font-family:'Liberation Mono',monospace;font-weight:normal;letter-spacing:-1.860px;-webkit-text-stroke:0.3px currentColor;">COUNT(*)</div>
</body></html>
